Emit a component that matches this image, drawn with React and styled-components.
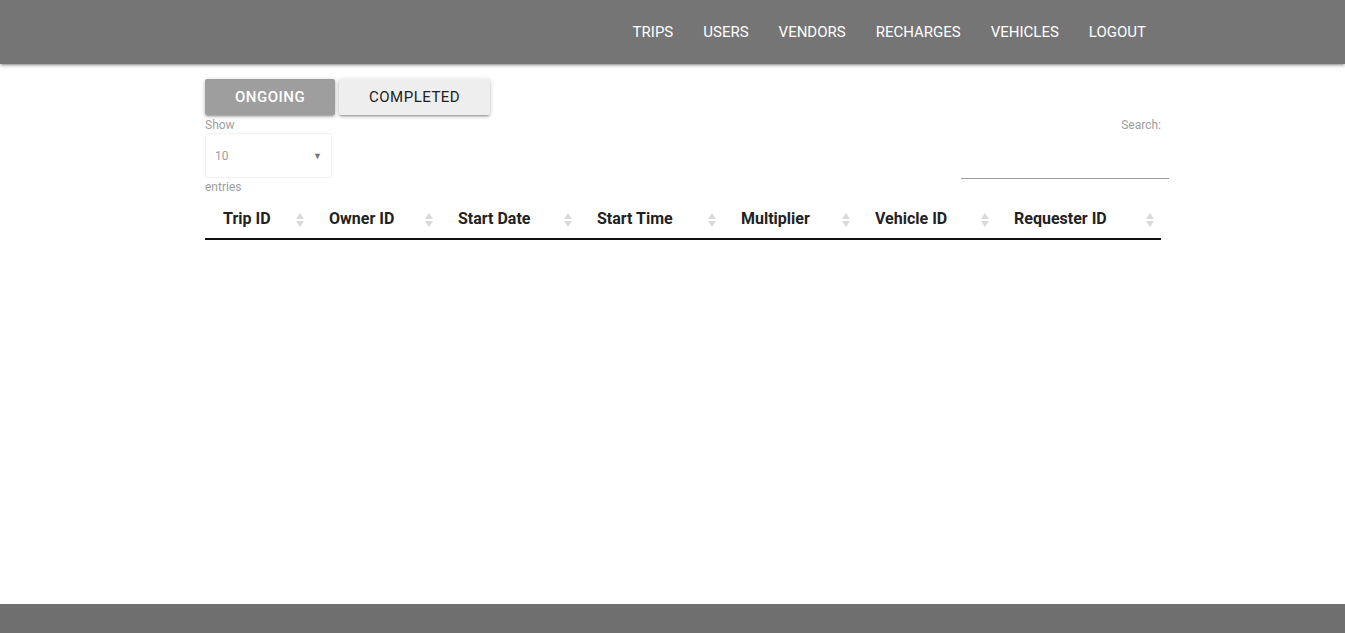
import React from 'react';
import styled, { createGlobalStyle } from 'styled-components';

const GlobalStyle = createGlobalStyle`
  html, body {
    margin: 0;
    padding: 0;
    background: #fff;
    font-family: Roboto, "Liberation Sans", sans-serif;
  }
  * { box-sizing: border-box; }
`;

const NavBar = styled.nav`
  height: 64px;
  background-color: #757575;
  box-shadow: 0 2px 2px 0 rgba(0,0,0,0.14), 0 3px 1px -2px rgba(0,0,0,0.12), 0 1px 5px 0 rgba(0,0,0,0.2);
  position: relative;
  z-index: 2;
`;

const NavInner = styled.div`
  width: 956px;
  margin-left: 205px;
  height: 100%;
  display: flex;
  justify-content: flex-end;
  align-items: center;
`;

const NavLink = styled.a`
  color: #fff;
  font-size: 15px;
  padding: 0 15px;
  line-height: 64px;
  text-decoration: none;
  text-transform: uppercase;
`;

const Main = styled.main`
  height: 540px;
  padding-top: 15px;
`;

const Container = styled.div`
  width: 956px;
  margin-left: 205px;
`;

const Tabs = styled.div`
  display: flex;
  gap: 4px;
`;

const TabButton = styled.button`
  height: 36px;
  border: none;
  border-radius: 2px;
  padding: 0 30px;
  font-family: Roboto, "Liberation Sans", sans-serif;
  font-size: 15px;
  letter-spacing: 0.5px;
  text-transform: uppercase;
  background: ${p => (p.$active ? '#9e9e9e' : '#eeeeee')};
  color: ${p => (p.$active ? '#fff' : '#222')};
  font-weight: ${p => (p.$active ? 500 : 400)};
  width: ${p => p.$w}px;
  box-shadow: 0 2px 2px 0 rgba(0,0,0,0.14), 0 3px 1px -2px rgba(0,0,0,0.12), 0 1px 5px 0 rgba(0,0,0,0.2);
`;

const Controls = styled.div`
  display: flex;
  justify-content: space-between;
  margin-top: 3px;
`;

const Label = styled.div`
  font-size: 12px;
  color: #9e9e9e;
  line-height: 15px;
`;

const LengthBox = styled.div`
  display: flex;
  flex-direction: column;
`;

const SelectBox = styled.div`
  width: 127px;
  height: 45px;
  border: 1px solid #f2f2f2;
  border-radius: 2px;
  margin: 0 0 2px;
  padding: 0 9px;
  display: flex;
  align-items: center;
  justify-content: space-between;
  font-size: 12px;
  color: #9e9e9e;
`;

const Caret = styled.span`
  font-size: 9px;
  color: #777;
`;

const SearchBox = styled.div`
  display: flex;
  flex-direction: column;
  align-items: flex-end;
  margin-right: -8px;
`;

const SearchLabel = styled(Label)`
  margin-right: 8px;
`;

const SearchInput = styled.div`
  width: 208px;
  height: 47px;
  border-bottom: 1px solid #9e9e9e;
  margin-top: -1px;
`;

const Table = styled.table`
  width: 956px;
  border-collapse: separate;
  border-spacing: 0;
  margin-top: 3px;
`;

const Th = styled.th`
  width: ${p => p.$w}px;
  text-align: left;
  padding: 10px 18px 9px;
  font-size: 16px;
  font-weight: 700;
  color: #222;
  border-bottom: 2px solid #111;
  position: relative;
  height: 42px;
`;

const Sort = styled.svg`
  position: absolute;
  right: 7px;
  top: 15px;
`;

const Footer = styled.footer`
  height: 64px;
  background: #6f6f6f;
`;

const navItems = ['Trips', 'Users', 'Vendors', 'Recharges', 'Vehicles', 'Logout'];

const columns = [
  ['Trip ID', 106],
  ['Owner ID', 129],
  ['Start Date', 139],
  ['Start Time', 144],
  ['Multiplier', 134],
  ['Vehicle ID', 139],
  ['Requester ID', 165],
];

const SortIcon = () => (
  <Sort width="8" height="14" viewBox="0 0 8 14">
    <path d="M4 0 L8 6 L0 6 Z" fill="#d9d9d9" />
    <path d="M0 8 L8 8 L4 14 Z" fill="#d9d9d9" />
  </Sort>
);

export default function App() {
  return (
    <>
      <GlobalStyle />
      <NavBar>
        <NavInner>
          {navItems.map(n => (
            <NavLink key={n} href="#">{n}</NavLink>
          ))}
        </NavInner>
      </NavBar>
      <Main>
        <Container>
          <Tabs>
            <TabButton $active $w={130}>Ongoing</TabButton>
            <TabButton $w={151}>Completed</TabButton>
          </Tabs>
          <Controls>
            <LengthBox>
              <Label>Show</Label>
              <SelectBox>
                <span>10</span>
                <Caret>▼</Caret>
              </SelectBox>
              <Label>entries</Label>
            </LengthBox>
            <SearchBox>
              <SearchLabel>Search:</SearchLabel>
              <SearchInput />
            </SearchBox>
          </Controls>
          <Table>
            <thead>
              <tr>
                {columns.map(([name, w]) => (
                  <Th key={name} $w={w}>
                    {name}
                    <SortIcon />
                  </Th>
                ))}
              </tr>
            </thead>
          </Table>
        </Container>
      </Main>
      <Footer />
    </>
  );
}
